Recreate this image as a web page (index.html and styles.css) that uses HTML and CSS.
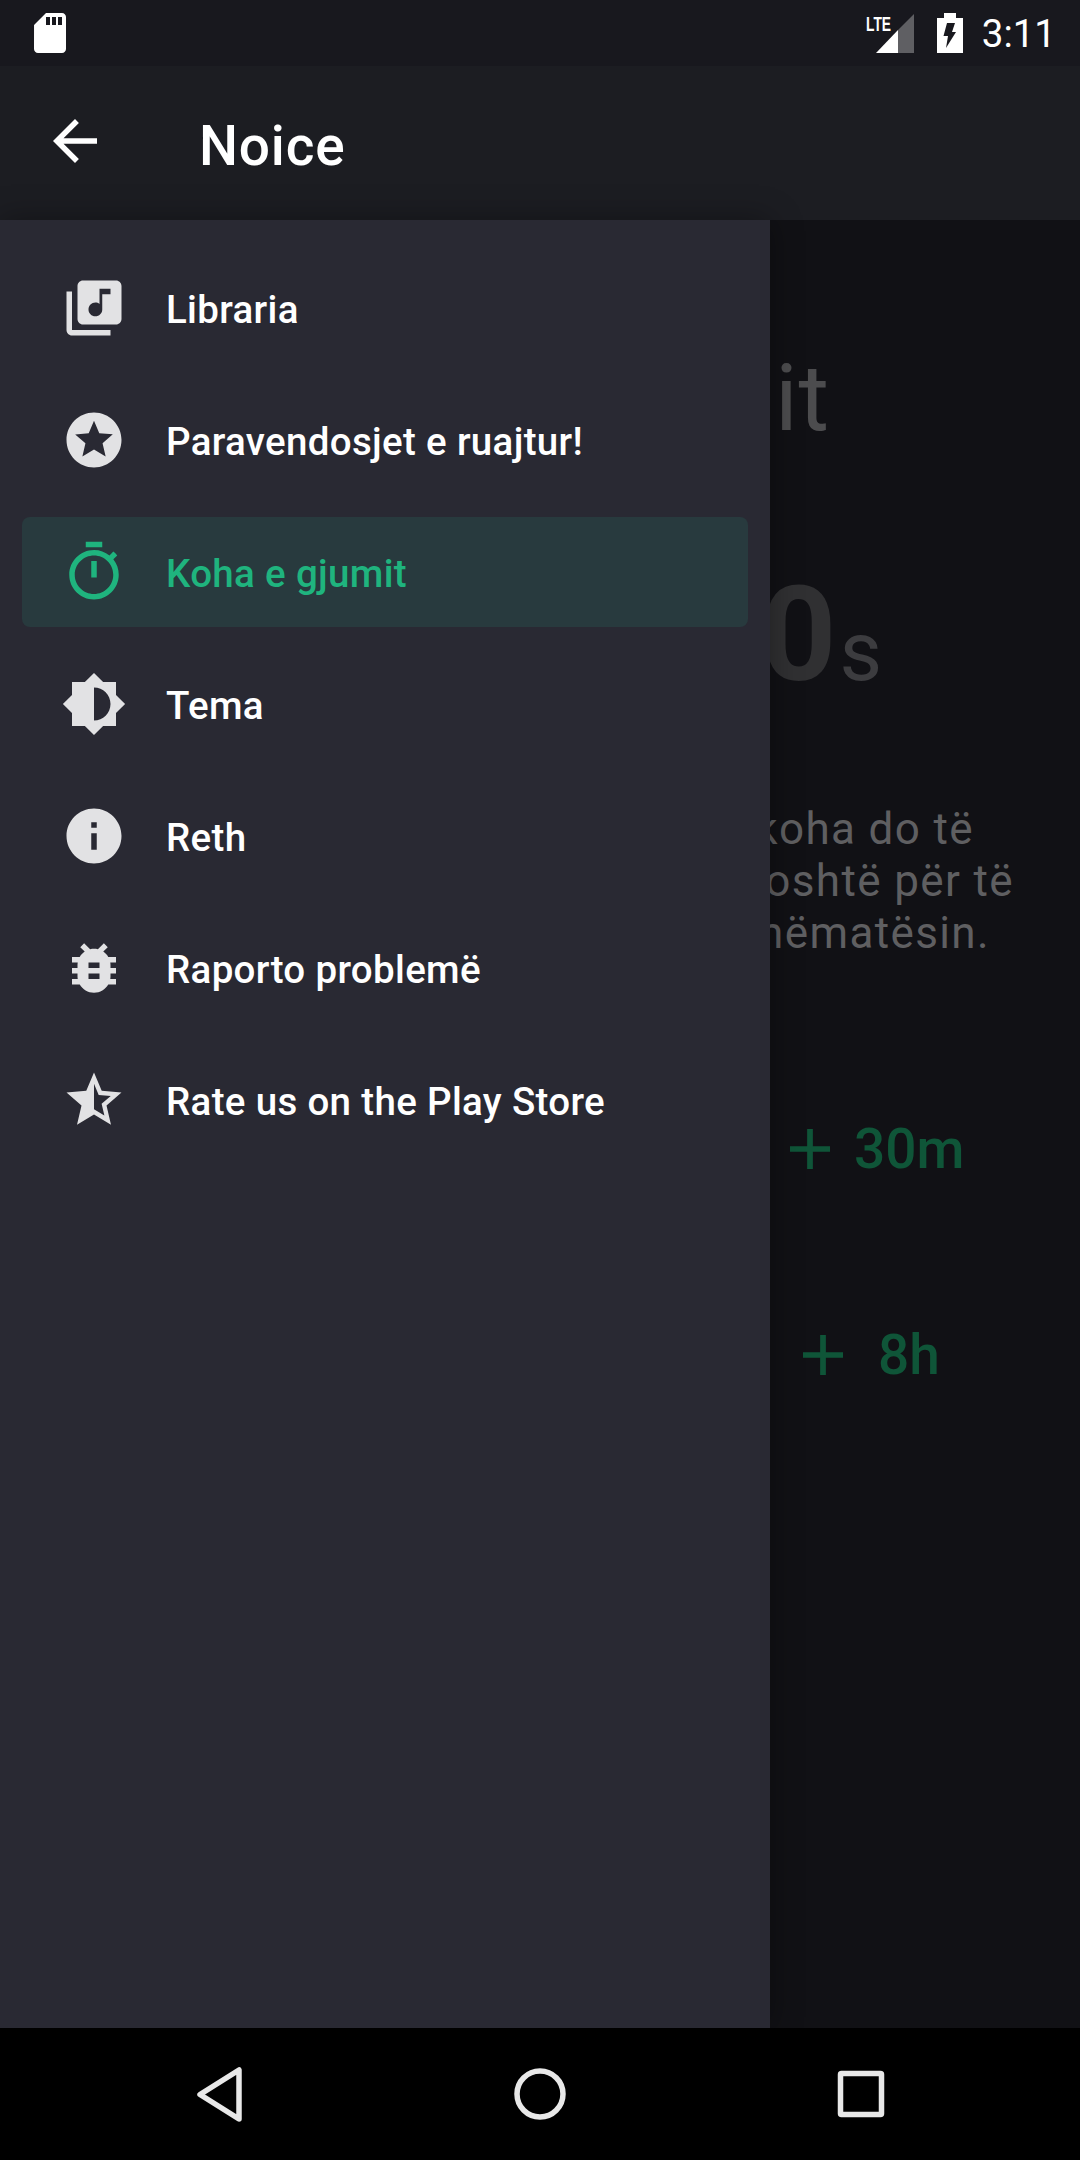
FILE: index.html
```html
<!DOCTYPE html>
<html lang="en">
<head>
    <meta charset="UTF-8">
    <meta name="viewport" content="width=device-width, initial-scale=1.0">
    <title>Noice</title>
    <link rel="stylesheet" href="styles.css">
</head>
<body>
    <!-- Status bar -->
    <div class="statusBar">
        <svg class="sdIcon" viewBox="0 0 24 24"><path d="M18 2h-8L4.02 8 4 20c0 1.1.9 2 2 2h12c1.1 0 2-.9 2-2V4c0-1.1-.9-2-2-2zm-6 6h-2V4h2v4zm3 0h-2V4h2v4zm3 0h-2V4h2v4z"/></svg>
        <div class="statusRight">
            <svg class="signalIcon" viewBox="0 0 48 39">
                <text class="lteText" x="0" y="17" textLength="25" lengthAdjust="spacingAndGlyphs">LTE</text>
                <path class="signalOff" d="M48 0V39H32V16z"/>
                <path d="M32 16V39H10z"/>
            </svg>
            <svg class="batteryIcon" viewBox="0 0 26 40"><path fill-rule="evenodd" d="M7 0h12v5h7v35H0V5h7zM10 10h8l-3 9h4L9 35l2-12H6.500z"/></svg>
            <span class="clock">3:11</span>
        </div>
    </div>

    <!-- App bar -->
    <div class="appBar">
        <svg class="backIcon" viewBox="0 0 24 24"><path d="M20 11H7.830l5.590-5.590L12 4l-8 8 8 8 1.410-1.410L7.830 13H20v-2z"/></svg>
        <h1 class="appTitle">Noice</h1>
    </div>

    <div class="stage">
        <!-- Navigation drawer -->
        <nav class="drawer">
            <a class="navItem">
                <svg class="navIcon" viewBox="0 0 24 24"><path d="M20 2H8c-1.100 0-2 .9-2 2v12c0 1.100.9 2 2 2h12c1.100 0 2-.9 2-2V4c0-1.100-.9-2-2-2zm-2 5h-3v5.500c0 1.380-1.120 2.500-2.500 2.500S10 13.880 10 12.500s1.120-2.500 2.500-2.500c.57 0 1.080.19 1.500.51V5h4v2zM4 6H2v14c0 1.100.9 2 2 2h14v-2H4V6z"/></svg>
                <span>Libraria</span>
            </a>
            <a class="navItem">
                <svg class="navIcon" viewBox="0 0 24 24"><path d="M11.990 2C6.470 2 2 6.480 2 12s4.470 10 9.990 10C17.520 22 22 17.520 22 12S17.520 2 11.990 2zm4.240 16L12 15.450 7.770 18l1.120-4.810-3.730-3.230 4.920-.42L12 5l1.920 4.530 4.920.42-3.730 3.230L16.230 18z"/></svg>
                <span>Paravendosjet e ruajtur!</span>
            </a>
            <a class="navItem navItemActive">
                <svg class="navIcon" viewBox="0 0 24 24"><path d="M15 1H9v2h6V1zm-4 13h2V8h-2v6zm8.030-6.610l1.420-1.420c-.43-.51-.9-.99-1.410-1.410l-1.420 1.420C16.070 4.740 14.120 4 12 4c-4.970 0-9 4.030-9 9s4.020 9 9 9 9-4.030 9-9c0-2.120-.74-4.070-1.970-5.610zM12 20c-3.870 0-7-3.130-7-7s3.130-7 7-7 7 3.130 7 7-3.130 7-7 7z"/></svg>
                <span>Koha e gjumit</span>
            </a>
            <a class="navItem">
                <svg class="navIcon" viewBox="0 0 24 24"><path d="M20 15.310L23.310 12 20 8.690V4h-4.690L12 .69 8.690 4H4v4.690L.69 12 4 15.310V20h4.690L12 23.310 15.310 20H20v-4.690zM12 18V6c3.310 0 6 2.690 6 6s-2.690 6-6 6z"/></svg>
                <span>Tema</span>
            </a>
            <a class="navItem">
                <svg class="navIcon" viewBox="0 0 24 24"><path d="M12 2C6.480 2 2 6.480 2 12s4.480 10 10 10 10-4.480 10-10S17.520 2 12 2zm1 15h-2v-6h2v6zm0-8h-2V7h2v2z"/></svg>
                <span>Reth</span>
            </a>
            <a class="navItem">
                <svg class="navIcon" viewBox="0 0 24 24"><path d="M20 8h-2.810c-.45-.78-1.070-1.450-1.820-1.960L17 4.410 15.590 3l-2.170 2.170C12.960 5.060 12.490 5 12 5c-.49 0-.96.06-1.410.17L8.410 3 7 4.410l1.620 1.630C7.880 6.550 7.260 7.220 6.810 8H4v2h2.090c-.05.33-.09.66-.09 1v1H4v2h2v1c0 .34.04.67.09 1H4v2h2.810c1.040 1.790 2.970 3 5.190 3s4.150-1.210 5.190-3H20v-2h-2.090c.05-.33.09-.66.09-1v-1h2v-2h-2v-1c0-.34-.04-.67-.09-1H20V8zm-6 8h-4v-2h4v2zm0-4h-4v-2h4v2z"/></svg>
                <span>Raporto problemë</span>
            </a>
            <a class="navItem">
                <svg class="navIcon" viewBox="0 0 24 24"><path d="M22 9.240l-7.190-.62L12 2 9.190 8.630 2 9.240l5.460 4.730L5.820 21 12 17.270 18.180 21l-1.630-7.030L22 9.240zM12 15.400V6.100l1.710 4.040 4.380.38-3.320 2.880 1 4.280L12 15.400z"/></svg>
                <span>Rate us on the Play Store</span>
            </a>
        </nav>

        <!-- What shows of the sleep timer page beside the drawer -->
        <div class="timerPage">
            <h2 class="timerTitle">it</h2>
            <div class="timerValue"><b>0</b><small>s</small></div>
            <p class="timerLine timerLine1">koha do të</p>
            <p class="timerLine timerLine2">oshtë për të</p>
            <p class="timerLine timerLine3">nëmatësin.</p>
            <div class="timerButton">
                <svg class="plusIcon" viewBox="5 5 14 14"><path d="M19 13h-6v6h-2v-6H5v-2h6V5h2v6h6v2z"/></svg>
                <span>30m</span>
            </div>
            <div class="timerButton timerButtonWide">
                <svg class="plusIcon" viewBox="5 5 14 14"><path d="M19 13h-6v6h-2v-6H5v-2h6V5h2v6h6v2z"/></svg>
                <span>8h</span>
            </div>
        </div>
    </div>

    <!-- System navigation -->
    <div class="systemNav">
        <svg class="systemIcon" viewBox="0 0 132 132"><path d="M86 42V91L47 66.500z"/></svg>
        <svg class="systemIcon" viewBox="0 0 132 132"><circle cx="66" cy="66" r="23"/></svg>
        <svg class="systemIcon" viewBox="0 0 132 132"><rect x="45.500" y="45.500" width="41" height="41" rx="1"/></svg>
    </div>
</body>
</html>
```

FILE: styles.css
```css
/* Basic Styles */
* {
    box-sizing: border-box;
}

body {
    font-family: Roboto, "Noto Sans", sans-serif;
    background-color: #111115;
    margin: 0;
    padding: 0;
    display: flex;
    flex-direction: column;
    width: 1080px;
    height: 2160px;
    overflow: hidden;
}

/* Status Bar */
.statusBar {
    flex: 0 0 66px;
    display: flex;
    justify-content: space-between;
    align-items: center;
    padding: 0 24px 0 26px;
    background-color: #18181e;
    color: #fff;
}

.sdIcon {
    width: 48px;
    height: 48px;
    fill: #fff;
}

.statusRight {
    display: flex;
    align-items: center;
}

.signalIcon {
    width: 48px;
    height: 39px;
    margin-right: 23px;
    fill: #fff;
}

.signalOff {
    fill: #5f5f63;
}

.lteText {
    font-family: "Liberation Sans", sans-serif;
    font-size: 21px;
    font-weight: 700;
}

.batteryIcon {
    width: 26px;
    height: 40px;
    margin-right: 19px;
    fill: #fff;
}

.clock {
    font-size: 38.5px;
    line-height: 45px;
}

/* App Bar */
.appBar {
    flex: 0 0 154px;
    display: flex;
    align-items: center;
    padding-left: 42px;
    background-color: #1c1d22;
}

.backIcon {
    width: 66px;
    height: 66px;
    margin-right: 91px;
    margin-top: -4px;
    fill: #fff;
}

.appTitle {
    margin: 6px 0 0;
    color: #fff;
    font-size: 55px;
    font-weight: 500;
    letter-spacing: 0.8px;
}

/* Drawer and page side by side */
.stage {
    flex: 1;
    display: flex;
    min-height: 0;
}

/* Drawer */
.drawer {
    flex: 0 0 770px;
    position: relative;
    z-index: 1;
    padding: 22px 22px 0;
    background-color: #292933;
    box-shadow: 0 0 30px rgba(0, 0, 0, 0.35);
}

.navItem {
    display: flex;
    align-items: center;
    gap: 39px;
    height: 110px;
    margin: 11px 0 22px;
    padding-left: 39px;
    border-radius: 8px;
    color: #fff;
    font-size: 38.5px;
    font-weight: 500;
    letter-spacing: 0.33px;
}

.navItem span {
    padding-top: 2px;
}

.navIcon {
    flex: none;
    width: 66px;
    height: 66px;
    fill: #e2e2e4;
}

.navItemActive {
    background-color: #283a3e;
    color: #1fb47e;
}

.navItemActive .navIcon {
    fill: #1fb47e;
}

/* Timer Page */
.timerPage {
    flex: 1;
    min-width: 0;
    overflow: hidden;
    display: flex;
    flex-direction: column;
    padding-top: 123px;
    white-space: nowrap;
}

.timerTitle {
    margin: 0 0 105px;
    padding-right: 250px;
    text-align: right;
    color: #4c4c4e;
    font-size: 93.5px;
    font-weight: 400;
    letter-spacing: 0.85px;
}

.timerValue {
    display: flex;
    justify-content: flex-end;
    align-items: baseline;
    gap: 3px;
    margin-bottom: 91px;
    padding-right: 198px;
}

.timerValue b {
    color: #303032;
    font-size: 132px;
    font-weight: 700;
}

.timerValue small {
    color: #3c3c3f;
    font-size: 82.5px;
}

.timerLine {
    display: flex;
    justify-content: flex-end;
    margin: 0;
    color: #5f5f61;
    font-size: 44px;
    line-height: 52px;
    letter-spacing: 1.37px;
}

.timerLine1 {
    padding-right: 106px;
}

.timerLine2 {
    padding-right: 66px;
}

.timerLine3 {
    padding-right: 90px;
    margin-bottom: 158px;
}

.timerButton {
    display: flex;
    align-items: center;
    gap: 24px;
    height: 64px;
    margin-left: 20px;
    margin-bottom: 142px;
    color: #0f5538;
    font-size: 55px;
    font-weight: 500;
}

.timerButtonWide {
    gap: 35px;
    margin-left: 33px;
}

.plusIcon {
    flex: none;
    width: 40px;
    height: 40px;
    fill: #0f5538;
}

/* System Navigation */
.systemNav {
    flex: 0 0 132px;
    display: flex;
    justify-content: space-between;
    padding: 0 153px;
    background-color: #000;
}

.systemIcon {
    width: 132px;
    height: 132px;
    fill: none;
    stroke: #e8e8e8;
    stroke-width: 5.5px;
    stroke-linejoin: round;
}
```
